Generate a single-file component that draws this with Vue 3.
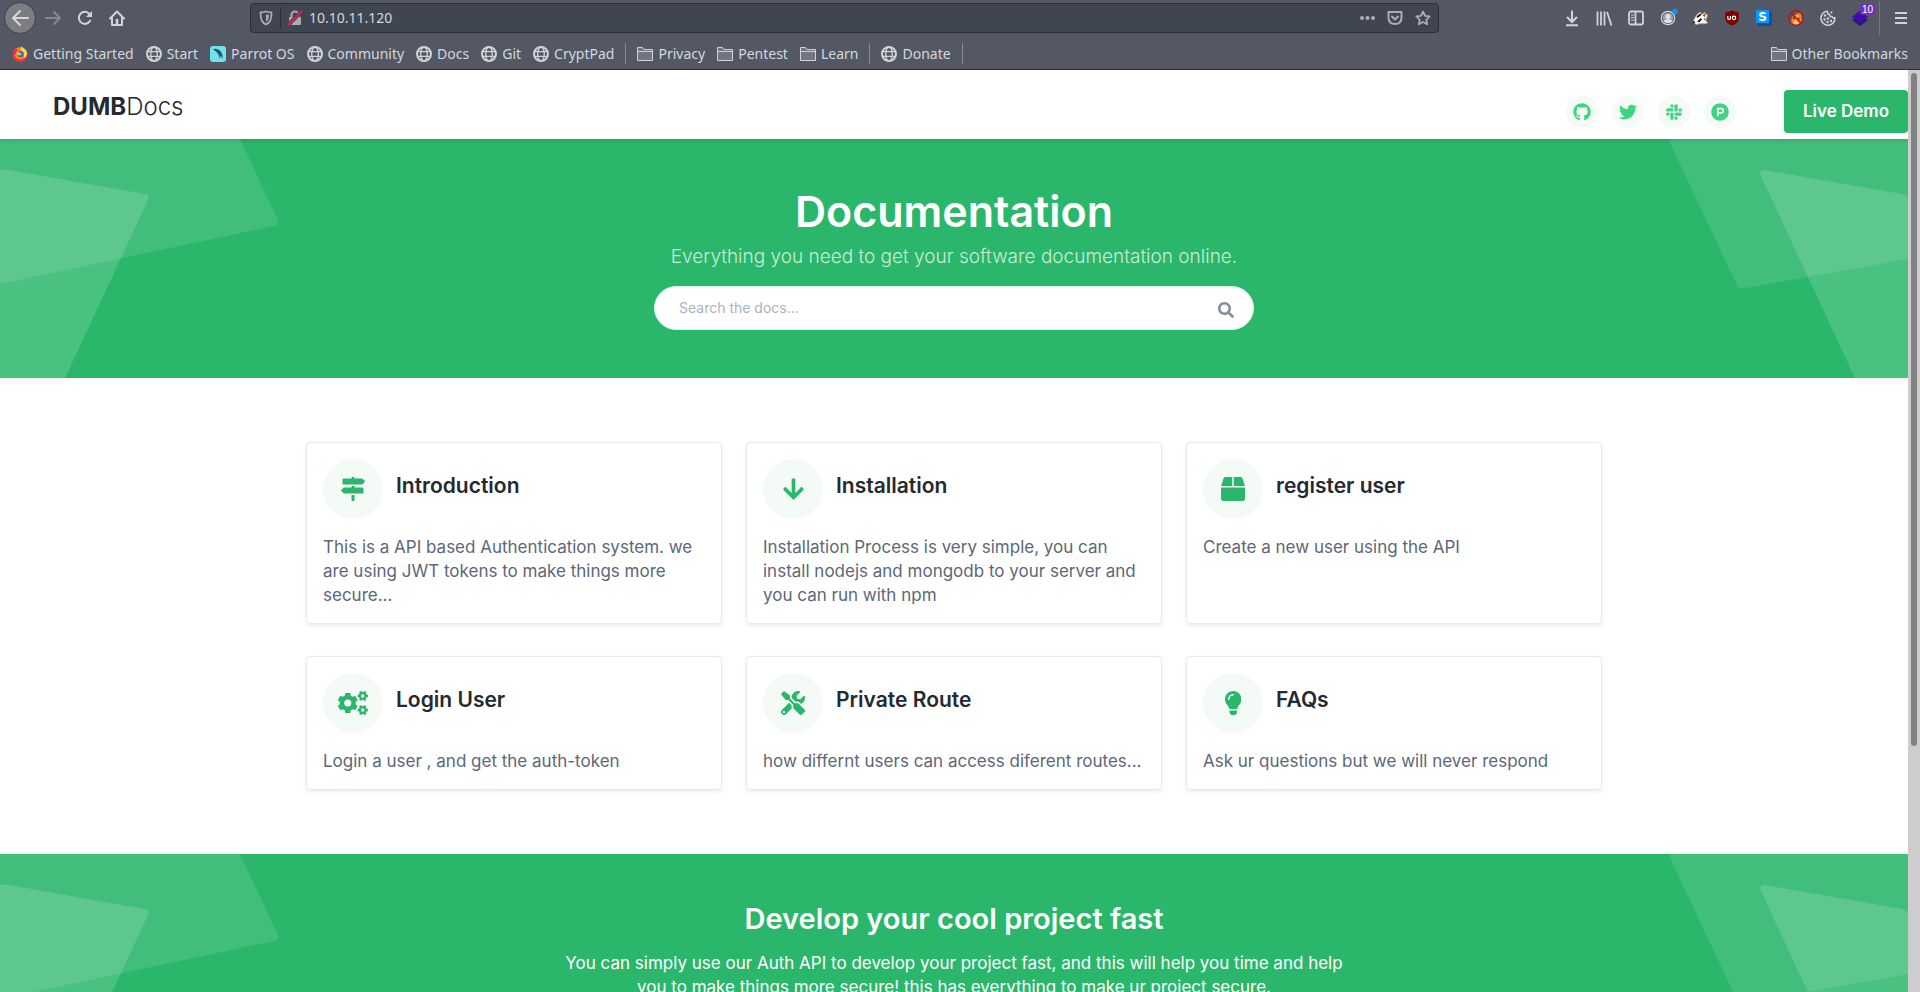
<script setup>
const bookmarks = [
  { label: 'Getting Started', icon: 'firefox' },
  { label: 'Start', icon: 'globe' },
  { label: 'Parrot OS', icon: 'parrot' },
  { label: 'Community', icon: 'globe' },
  { label: 'Docs', icon: 'globe' },
  { label: 'Git', icon: 'globe' },
  { label: 'CryptPad', icon: 'globe', divider: true },
  { label: 'Privacy', icon: 'folder' },
  { label: 'Pentest', icon: 'folder' },
  { label: 'Learn', icon: 'folder', divider: true },
  { label: 'Donate', icon: 'globe', divider: true },
]

const socials = [
  { name: 'GitHub', box: '0 0 496 512', d: 'M244.8 8C106.1 8 0 113.3 0 252c0 110.9 69.8 205.8 169.5 239.2 12.8 2.3 17.3-5.6 17.3-12.1 0-6.2-.3-40.4-.3-61.4 0 0-70 15-84.7-29.8 0 0-11.4-29.1-27.8-36.6 0 0-22.9-15.7 1.6-15.4 0 0 24.9 2 38.6 25.8 21.9 38.6 58.6 27.5 72.9 20.9 2.3-16 8.8-27.1 16-33.7-55.9-6.2-112.3-14.3-112.3-110.5 0-27.5 7.6-41.3 23.6-58.9-2.6-6.5-11.1-33.3 2.6-67.9 20.9-6.5 69 27 69 27 20-5.6 41.5-8.5 62.8-8.5s42.8 2.9 62.8 8.5c0 0 48.1-33.6 69-27 13.7 34.7 5.2 61.4 2.6 67.9 16 17.7 25.8 31.5 25.8 58.9 0 96.5-58.9 104.2-114.8 110.5 9.2 7.9 17 22.9 17 46.4 0 33.7-.3 75.4-.3 83.6 0 6.5 4.6 14.4 17.3 12.1C428.2 457.8 496 362.9 496 252 496 113.3 383.5 8 244.8 8z' },
  { name: 'Twitter', box: '0 0 512 512', d: 'M459.37 151.716c.325 4.548.325 9.097.325 13.645 0 138.72-105.583 298.558-298.558 298.558-59.452 0-114.68-17.219-161.137-47.106 8.447.974 16.568 1.299 25.34 1.299 49.055 0 94.213-16.568 130.274-44.832-46.132-.975-84.792-31.188-98.112-72.772 6.498.974 12.995 1.624 19.818 1.624 9.421 0 18.843-1.3 27.614-3.573-48.081-9.747-84.143-51.98-84.143-102.985v-1.299c13.969 7.797 30.214 12.67 47.431 13.319-28.264-18.843-46.781-51.005-46.781-87.391 0-19.492 5.197-37.36 14.294-52.954 51.655 63.675 129.3 105.258 216.365 109.807-1.624-7.797-2.599-15.918-2.599-24.04 0-57.828 46.782-104.934 104.934-104.934 30.213 0 57.502 12.67 76.67 33.137 23.715-4.548 46.456-13.32 66.599-25.34-7.798 24.366-24.366 44.833-46.132 57.827 21.117-2.273 41.584-8.122 60.426-16.243-14.292 20.791-32.161 39.308-52.628 54.253z' },
  { name: 'Slack', box: '0 0 448 512', d: 'M94.12 315.1c0 25.9-21.16 47.06-47.06 47.06S0 341 0 315.1c0-25.9 21.16-47.06 47.06-47.06h47.06v47.06zm23.72 0c0-25.9 21.16-47.06 47.06-47.06s47.06 21.16 47.06 47.06v117.84c0 25.9-21.16 47.06-47.06 47.06s-47.06-21.16-47.06-47.06V315.1zm47.06-188.98c-25.9 0-47.06-21.16-47.06-47.06S139 32 164.9 32s47.06 21.16 47.06 47.06v47.06H164.9zm0 23.72c25.9 0 47.06 21.16 47.06 47.06s-21.16 47.06-47.06 47.06H47.06C21.16 243.96 0 222.8 0 196.9s21.16-47.06 47.06-47.06H164.9zm188.98 47.06c0-25.9 21.16-47.06 47.06-47.06 25.9 0 47.06 21.16 47.06 47.06s-21.16 47.06-47.06 47.06h-47.06V196.9zm-23.72 0c0 25.9-21.16 47.06-47.06 47.06-25.9 0-47.06-21.16-47.06-47.06V79.06c0-25.9 21.16-47.06 47.06-47.06 25.9 0 47.06 21.16 47.06 47.06V196.9zM283.1 385.88c25.9 0 47.06 21.16 47.06 47.06 0 25.9-21.16 47.06-47.06 47.06-25.9 0-47.06-21.16-47.06-47.06v-47.06h47.06zm0-23.72c-25.9 0-47.06-21.16-47.06-47.06 0-25.9 21.16-47.06 47.06-47.06h117.84c25.9 0 47.06 21.16 47.06 47.06 0 25.9-21.16 47.06-47.06 47.06H283.1z' },
  { name: 'Product Hunt', box: '0 0 512 512', d: 'M326.3 218.8c0 20.5-16.7 37.2-37.2 37.2h-70.3v-74.4h70.3c20.5 0 37.2 16.7 37.2 37.2zM504 256c0 137-111 248-248 248S8 393 8 256 119 8 256 8s248 111 248 248zm-128.1-37.2c0-47.9-38.9-86.8-86.8-86.8H169.2v248h49.6v-74.4h70.3c47.9 0 86.8-38.9 86.8-86.8z' },
]

// Six-toothed cog outline with a round hole.
function gear(cx, cy, outer, inner, hole, turn) {
  const step = Math.PI / 3
  const at = (r, a) => `${(cx + r * Math.cos(a)).toFixed(1)} ${(cy + r * Math.sin(a)).toFixed(1)}`
  const points = []
  for (let i = 0; i < 6; i++) {
    const a = turn + i * step
    points.push(at(inner, a - 0.36), at(outer, a - 0.25), at(outer, a + 0.25), at(inner, a + 0.36))
  }
  return `M${points.join('L')}ZM${cx - hole} ${cy}a${hole} ${hole} 0 1 0 ${2 * hole} 0a${hole} ${hole} 0 1 0 ${-2 * hole} 0Z`
}
const cogs = gear(208, 256, 222, 172, 76, Math.PI / 2) + gear(528, 106, 114, 84, 36, 0) + gear(528, 406, 114, 84, 36, 0)

const cards = [
  { title: 'Introduction', text: 'This is a API based Authentication system. we are using JWT tokens to make things more secure...', box: '0 0 512 512', d: 'M507.31 84.69L464 41.37c-6-6-14.14-9.37-22.63-9.37H288V16c0-8.84-7.16-16-16-16h-32c-8.84 0-16 7.16-16 16v16H56c-13.25 0-24 10.75-24 24v80c0 13.25 10.75 24 24 24h385.37c8.49 0 16.62-3.37 22.63-9.37l43.31-43.31c6.25-6.26 6.25-16.38 0-22.63zM224 496c0 8.84 7.16 16 16 16h32c8.84 0 16-7.16 16-16V384h-64v112zm232-272H288v-32h-64v32H70.63c-8.49 0-16.62 3.37-22.63 9.37L4.69 276.69c-6.25 6.25-6.25 16.38 0 22.63L48 342.63c6 6 14.14 9.37 22.63 9.37H456c13.25 0 24-10.75 24-24v-80c0-13.25-10.75-24-24-24z' },
  { title: 'Installation', text: 'Installation Process is very simple, you can install nodejs and mongodb to your server and you can run with npm', box: '0 0 448 512', d: 'M413.1 222.5l22.2 22.2c9.4 9.4 9.4 24.6 0 33.9L241 473c-9.4 9.4-24.6 9.4-33.9 0L12.7 278.6c-9.4-9.4-9.4-24.6 0-33.9l22.2-22.2c9.5-9.5 25-9.3 34.3.4L184 343.4V56c0-13.3 10.7-24 24-24h32c13.3 0 24 10.7 24 24v287.4l114.8-120.5c9.3-9.8 24.8-10 34.3-.4z' },
  { title: 'register user', text: 'Create a new user using the API', box: '0 0 512 512', d: 'M509.5 184.6L458.9 32.8C452.4 13.2 434.1 0 413.4 0H272v192h238.7c-.4-2.5-.4-5-1.2-7.4zM240 0H98.6c-20.7 0-39 13.2-45.5 32.8L2.5 184.6c-.8 2.4-.8 4.9-1.2 7.4H240V0zM0 224v240c0 26.5 21.5 48 48 48h416c26.5 0 48-21.5 48-48V224H0z' },
  { title: 'Login User', text: 'Login a user , and get the auth-token', box: '0 0 640 512', d: cogs },
  { title: 'Private Route', text: 'how differnt users can access diferent routes...', box: '0 0 512 512', d: 'M501.1 395.7L384 278.6c-23.1-23.1-57.6-27.6-85.4-13.9L192 158.1V96L64 0 0 64l96 128h62.1l106.6 106.6c-13.6 27.8-9.2 62.3 13.9 85.4l117.1 117.1c14.6 14.6 38.2 14.6 52.7 0l52.7-52.7c14.5-14.6 14.5-38.2 0-52.7zM331.7 225c28.3 0 54.9 11 74.9 31l19.4 19.4c15.8-6.9 30.8-16.5 43.8-29.5 37.1-37.1 49.7-89.3 37.9-136.7-2.2-9-13.5-12.1-20.1-5.5l-74.4 74.4-67.9-11.3L334 98.9l74.4-74.4c6.6-6.6 3.4-17.9-5.7-20.2-47.4-11.7-99.6.9-136.6 37.9-28.5 28.5-41.9 66.1-41.2 103.6l82.1 82.1c8.1-1.9 16.5-2.9 24.7-2.9zm-103.9 82l-56.7-56.7L18.7 402.8c-25 25-25 65.5 0 90.5s65.5 25 90.5 0l123.6-123.6c-7.6-19.9-9.9-41.6-5-62.7zM64 472c-13.2 0-24-10.8-24-24 0-13.3 10.7-24 24-24s24 10.7 24 24c0 13.2-10.7 24-24 24z' },
  { title: 'FAQs', text: 'Ask ur questions but we will never respond', box: '0 0 352 512', d: 'M96.06 454.35c.01 6.29 1.87 12.45 5.36 17.69l17.09 25.69a31.99 31.99 0 0 0 26.64 14.28h61.71a31.99 31.99 0 0 0 26.64-14.28l17.09-25.69a31.989 31.989 0 0 0 5.36-17.69l.04-38.35H96.01l.05 38.35zM0 176c0 44.37 16.45 84.85 43.56 115.78 16.52 18.85 42.36 58.23 52.21 91.45.04.26.07.52.11.78h160.24c.04-.26.07-.51.11-.78 9.85-33.22 35.69-72.6 52.21-91.45C335.55 260.85 352 220.37 352 176 352 78.61 272.91-.3 175.45 0 73.44.31 0 82.97 0 176zm176-80c-44.11 0-80 35.89-80 80 0 8.84-7.16 16-16 16s-16-7.16-16-16c0-61.76 50.24-112 112-112 8.84 0 16 7.16 16 16s-7.16 16-16 16z' },
]
</script>

<template>
  <div class="window">
    <svg class="defs" width="0" height="0" aria-hidden="true">
      <symbol id="globe" viewBox="0 0 16 16">
        <g fill="none" stroke="#d0d4da">
          <circle cx="8" cy="8" r="7" stroke-width="2" />
          <ellipse cx="8" cy="8" rx="3.3" ry="7" stroke-width="1.3" />
          <path d="M1.5 5.7h13M1.5 10.3h13" stroke-width="1.3" />
        </g>
      </symbol>
      <symbol id="folder" viewBox="0 0 16 16">
        <path d="M.5 14.5v-13h5l1.5 2h8.500v11zM.5 5.500h15" fill="#717580" stroke="#d0d4da" />
      </symbol>
      <symbol id="firefox" viewBox="0 0 16 16">
        <circle cx="8" cy="8.500" r="7.200" fill="#ff8a16" />
        <path d="M1 5l1.500-3 1 2L6 2.500 5 6 2.500 9Q4 14 9 13.500T14.500 8 12 2.500Q17 6 14.700 12 11 17 5.500 15.300 0 13 1 5z" fill="#f5264a" />
        <path d="M9 .5q5 2.500 6 6 0 4-2.500 5.500Q12 7 9 5z" fill="#ffd83a" />
        <circle cx="8.500" cy="8" r="3.200" fill="#2364d8" />
        <path d="M4.500 5L8 6.500 10 9l-3 .5-2-1z" fill="#ffb52b" />
        <path d="M8 4.500l2.500 1L10 8z" fill="#1aa0ef" />
      </symbol>
      <symbol id="parrot" viewBox="0 0 16 16">
        <rect width="16" height="16" rx="3" fill="#6fe3ef" />
        <path d="M3 3.200Q8 1.800 10.800 5.500q2 2.700 2 7.500L10.500 9.500 10 13 8.200 8Q7 6 3 3.200z" fill="#33515e" />
      </symbol>
      <symbol id="shapes-left" viewBox="0 0 280 239">
        <path d="M0 0H240L277.500 80Q280 86 274 87L0 145Z" fill="#fff" fill-opacity=".11" />
        <path d="M0 31Q4 30 9 31L145 55Q150 56 148 61L65 239H0Z" fill="#fff" fill-opacity=".15" />
      </symbol>
      <symbol id="shapes-right" viewBox="0 0 238 239">
        <path d="M0 0V4L66 144Q68 150 75 149L238 120V0Z" fill="#fff" fill-opacity=".11" />
        <path d="M185 239L90 35Q90 31 95 31L232 55Q237 57 238 59V239Z" fill="#fff" fill-opacity=".15" />
      </symbol>
    </svg>

    <div class="chrome">
      <div class="toolbar">
        <button class="tool back" aria-label="Back">
          <svg viewBox="0 0 16 16" fill="none" stroke="#d5d8dd" stroke-width="2"><path d="M16 8H1M8 1L1 8l7 7" stroke-linejoin="round" stroke-linecap="round" /></svg>
        </button>
        <button class="tool" aria-label="Forward">
          <svg viewBox="0 0 16 16" fill="none" stroke="#868a94" stroke-width="2"><path d="M0 8h15M8.500 1.500L15 8l-6.500 6.500" stroke-linejoin="round" /></svg>
        </button>
        <button class="tool" aria-label="Reload">
          <svg viewBox="0 0 16 16" fill="none" stroke="#d0d4da" stroke-width="2"><path d="M12.500 4A6 6 0 1 0 13.500 10" /><path d="M15 1v6H9z" fill="#d0d4da" stroke="none" /></svg>
        </button>
        <button class="tool" aria-label="Home">
          <svg viewBox="0 0 16 16" fill="none" stroke="#d0d4da" stroke-width="2"><path d="M1 8.500L8 1.500l7 7M3 8v7h10V8" stroke-linejoin="round" stroke-linecap="round" /><path d="M8 9v6" stroke-width="2.500" /></svg>
        </button>
        <span class="spacer"></span>
        <div class="urlbar">
          <svg class="ico" viewBox="0 0 16 16" fill="none" stroke="#a9adb6" stroke-width="1.800"><path d="M8 1.500q3 1 5.500 1 .3 9.500-5.500 12Q2.200 12 2.500 2.500 5 2.500 8 1.500z" stroke-linejoin="round" /><path d="M8 4v8q3-2 3-7-1.500 0-3-1z" fill="#a9adb6" stroke="none" /></svg>
          <span class="url-rule"></span>
          <svg class="ico" viewBox="0 0 16 16"><path d="M4.500 8V5a3.500 3.500 0 0 1 7 0v3" fill="none" stroke="#a9adb6" stroke-width="2" /><rect x="2" y="7" width="12" height="8" rx="1" fill="#a9adb6" /><path d="M1 15L15 1" stroke="#404651" stroke-width="4" /><path d="M1.500 14.500l13-13" stroke="#ff0f45" stroke-width="2" stroke-linecap="round" /></svg>
          <input class="url" aria-label="Address" value="10.10.11.120" />
          <svg class="ico" viewBox="0 0 16 16" fill="#a9adb6"><circle cx="3" cy="8" r="2" /><circle cx="8.500" cy="8" r="2" /><circle cx="14" cy="8" r="2" /></svg>
          <svg class="ico" viewBox="0 0 16 16" fill="none" stroke="#a9adb6" stroke-width="2" stroke-linejoin="round"><path d="M1.500 2h13v5q0 7-6.500 7T1.500 7z" /><path d="M5 6.500l3 3 3-3" stroke-linecap="round" /></svg>
          <svg class="ico" viewBox="0 0 16 16" fill="none" stroke="#a9adb6" stroke-width="1.800" stroke-linejoin="round"><path d="M8 1.500l2 4.300 4.700.6-3.400 3.200.9 4.700L8 12l-4.200 2.300.9-4.700L1.300 6.400 6 5.800z" /></svg>
        </div>
        <span class="spacer"></span>
        <button class="tool" aria-label="Downloads">
          <svg viewBox="0 0 16 16" fill="none" stroke="#d0d4da" stroke-width="2"><path d="M8 .5v11M3 7l5 5 5-5M2 15.200h12" /></svg>
        </button>
        <button class="tool" aria-label="Library">
          <svg viewBox="0 0 16 16" fill="none" stroke="#d0d4da" stroke-width="1.800"><path d="M1.500 1.500v14M5 1.500v14M8.500 1.500v14M11 2l4.500 13.500" /></svg>
        </button>
        <button class="tool" aria-label="Sidebar">
          <svg viewBox="0 0 16 16" fill="none" stroke="#d0d4da" stroke-width="1.800"><rect x="1" y="1.500" width="14" height="13" rx="2" /><path d="M7.500 2v12" /><path d="M3 5h3M3 7.500h3M3 10h3" stroke-width="1" /></svg>
        </button>
        <button class="tool" aria-label="Account">
          <svg viewBox="0 0 16 16"><circle cx="8" cy="8" r="6.700" fill="none" stroke="#d0d4da" stroke-width="1.200" /><circle cx="8" cy="8" r="5.200" fill="#9a9ea7" /><circle cx="8" cy="6.500" r="2.600" fill="#dfe2e6" /><path d="M4 11.500q0-2.200 4-2.200t4 2.200q-4 3-8 0z" fill="#dfe2e6" /><circle cx="15" cy="1.200" r="2.800" fill="#0a90ff" /></svg>
        </button>
        <button class="tool" aria-label="Privacy Badger">
          <svg viewBox="0 0 16 16"><path d="M.5 12.500L4.500 5 8 2 9.500 4.500l3.500-2 .5 2.500 2-.5-1.500 6 1.500 2.500-3 .8-4-.3-4 1z" fill="#fff" stroke="#dd9a66" /><path d="M4.500 6.500L8 3.500l1.500 1.500-4 3zM11 5l2-1-.5 3.500zM5 11.500l3.500-3.300 1.800 1-2.800 3z" fill="#1d1d20" /><path d="M11.500 9l2-1v3z" fill="#555" /><circle cx="1.600" cy="12.300" r="1.200" fill="#1d1d20" /></svg>
        </button>
        <button class="tool" aria-label="uBlock Origin">
          <svg viewBox="0 0 16 16"><path d="M8 .5Q11 2 14.800 2.200v6Q14 13.500 8 15.800 2 13.500 1.200 8.200v-6Q5 2 8 .5z" fill="#800000" /><path d="M3.800 6v2.200a1.300 1.300 0 0 0 2.600 0V6" fill="none" stroke="#fff" stroke-width="1.200" /><circle cx="10" cy="7.800" r="1.700" fill="none" stroke="#fff" stroke-width="1.200" /></svg>
        </button>
        <button class="tool" aria-label="Stylus">
          <svg viewBox="0 0 16 16"><path d="M0 0h13l3 3v13H3L0 13z" fill="#0a4f96" /><path d="M0 0h13v13H0z" fill="#0797ff" /><text x="6.500" y="11" text-anchor="middle" font-family="DejaVu Sans" font-weight="700" font-size="12" fill="#fff">S</text></svg>
        </button>
        <button class="tool" aria-label="FoxyProxy">
          <svg viewBox="0 0 16 16"><path d="M3 13L4 7l6-4 3 1 1 6-3 4-5 1z" fill="#f58220" /><path d="M5 12l3-2 3 3-3 2zM8 6l2-1 1 2z" fill="#ffd79a" /><path d="M5 7h1.500v2H5zM10 8h1.500v1.500H10z" fill="#703010" /><circle cx="8" cy="8" r="7.300" fill="none" stroke="#c80f0f" stroke-width="1.200" /><path d="M3 3l10 10" stroke="#c80f0f" stroke-width="1.400" /></svg>
        </button>
        <button class="tool" aria-label="Cookies">
          <svg viewBox="0 0 16 16"><path d="M7.500 1.200A7 7 0 1 0 14.900 7.500Q13 9 12 6.500 9.500 7 9.500 4.500 7 4.500 7.500 1.200z" fill="none" stroke="#d0d4da" stroke-width="1.500" stroke-linejoin="round" /><g fill="#d0d4da"><circle cx="5" cy="5.500" r="1.200" /><circle cx="4.500" cy="9.500" r="1.200" /><circle cx="8" cy="8.500" r="1.200" /><circle cx="7.500" cy="12" r="1.200" /><circle cx="11" cy="11" r="1.200" /><circle cx="11.500" cy="2.500" r="1.100" /></g></svg>
        </button>
        <button class="tool" aria-label="Wappalyzer">
          <svg viewBox="0 0 16 16"><path d="M0 10l8-4.500 8 4.500-8 6z" fill="#241a78" /><path d="M0 7l8-6.500L16 7l-8 6z" fill="#4608ad" /></svg>
          <span class="badge">10</span>
        </button>
        <span class="tool-rule"></span>
        <button class="tool" aria-label="Menu">
          <svg viewBox="0 0 16 16" stroke="#d0d4da" stroke-width="2"><path d="M2 3h12M2 8h12M2 13h12" /></svg>
        </button>
      </div>

      <nav class="bookmarks" aria-label="Bookmarks">
        <template v-for="b in bookmarks" :key="b.label">
          <a class="bookmark" href="#"><svg class="ico"><use :href="'#' + b.icon" /></svg>{{ b.label }}</a>
          <span v-if="b.divider" class="rule"></span>
        </template>
        <a class="bookmark other" href="#"><svg class="ico"><use href="#folder" /></svg>Other Bookmarks</a>
      </nav>
    </div>

    <div class="viewport">
      <div class="page">
        <header class="header">
          <a class="logo" href="#"><b>DUMB</b>Docs</a>
          <div class="actions">
            <a v-for="s in socials" :key="s.name" class="social" href="#" :aria-label="s.name">
              <svg :viewBox="s.box"><path :d="s.d" /></svg>
            </a>
            <a class="demo" href="#">Live Demo</a>
          </div>
        </header>

        <section class="band">
          <svg class="deco left"><use href="#shapes-left" /></svg>
          <svg class="deco right"><use href="#shapes-right" /></svg>
          <h1>Documentation</h1>
          <p class="tagline">Everything you need to get your software documentation online.</p>
          <form class="search" @submit.prevent>
            <input type="text" placeholder="Search the docs..." aria-label="Search the docs" />
            <button type="submit" aria-label="Search">
              <svg viewBox="0 0 512 512"><path d="M505 442.700L405.300 343c-4.500-4.500-10.600-7-17-7H372c27.600-35.300 44-79.700 44-128C416 93.100 322.900 0 208 0S0 93.100 0 208s93.100 208 208 208c48.300 0 92.700-16.400 128-44v16.300c0 6.400 2.500 12.500 7 17l99.700 99.700c9.400 9.400 24.600 9.400 33.900 0l28.300-28.300c9.400-9.400 9.400-24.600.1-34zM208 336c-70.700 0-128-57.200-128-128 0-70.700 57.200-128 128-128 70.700 0 128 57.200 128 128 0 70.700-57.200 128-128 128z" /></svg>
            </button>
          </form>
        </section>

        <main class="cards">
          <article v-for="c in cards" :key="c.title" class="card">
            <div class="card-head">
              <span class="disc"><svg :viewBox="c.box"><path :d="c.d" fill-rule="evenodd" /></svg></span>
              <h2>{{ c.title }}</h2>
            </div>
            <p>{{ c.text }}</p>
          </article>
        </main>

        <section class="band">
          <svg class="deco left"><use href="#shapes-left" /></svg>
          <svg class="deco right"><use href="#shapes-right" /></svg>
          <h2 class="cta-title">Develop your cool project fast</h2>
          <p class="cta-text">You can simply use our Auth API to develop your project fast, and this will help you time and help you to make things more secure! this has everything to make ur project secure.</p>
        </section>
      </div>
      <div class="scrollbar"><div class="thumb"></div></div>
    </div>
  </div>
</template>

<style>
body {
  margin: 0;
}
</style>

<style scoped>
* {
  box-sizing: border-box;
}
.window {
  display: flex;
  flex-direction: column;
  height: 100vh;
  overflow: hidden;
  background: #fff;
  color: #252930;
  font-family: Inter, "Noto Sans", sans-serif;
  font-size: 17px;
  line-height: 24px;
}
.defs {
  position: absolute;
}
a {
  color: inherit;
  text-decoration: none;
}
button {
  border: 0;
  padding: 0;
  background: none;
}
h1, h2, p {
  margin: 0;
}

.chrome {
  flex: none;
  background: #545864;
  border-bottom: 1px solid #2b2e39;
  color: #d3d7de;
  font-family: "Noto Sans", sans-serif;
}
.toolbar {
  display: flex;
  align-items: center;
  height: 36px;
  padding: 0 3px 0 4px;
}
.tool {
  position: relative;
  display: flex;
  align-items: center;
  justify-content: center;
  flex: none;
  width: 32px;
  height: 32px;
}
.tool svg {
  width: 16px;
  height: 16px;
  overflow: visible;
}
.back {
  margin-right: 1px;
  border: 1px solid #40434e;
  border-radius: 50%;
  background: #7c7d80;
}
.badge {
  position: absolute;
  top: 2px;
  right: 1px;
  padding: 0 2px;
  border-radius: 2px;
  background: #6a35b5;
  color: #fff;
  font-size: 10px;
  line-height: 11px;
}
.tool-rule {
  width: 1px;
  height: 34px;
  margin: 0 5px 0 3px;
  background: #747883;
}
.spacer {
  flex: 117 1 0;
}
.urlbar {
  flex: 1173 1 0;
  display: flex;
  align-items: center;
  height: 30px;
  padding: 0 7px;
  border: 1px solid #2b2e39;
  border-radius: 4px;
  background: #404651;
}
.urlbar .ico + .ico {
  margin-left: 12px;
}
.ico {
  flex: none;
  width: 16px;
  height: 16px;
}
.url-rule {
  width: 1px;
  height: 22px;
  margin: 0 6px;
  background: #2b2e39;
}
.url {
  flex: 1;
  min-width: 0;
  margin: 0 6px;
  padding: 0;
  border: 0;
  outline: 0;
  background: none;
  color: #d3d7de;
  font: 14px/22px "Noto Sans", sans-serif;
}
.bookmarks {
  display: flex;
  align-items: center;
  gap: 12px;
  height: 33px;
  padding: 2px 12px 0;
  font-size: 14px;
  line-height: 22px;
  white-space: nowrap;
}
.bookmark {
  display: flex;
  align-items: center;
  gap: 5px;
}
.other {
  margin-left: auto;
}
.rule {
  width: 1px;
  height: 21px;
  margin: 0 -1px;
  background: #858994;
}

.viewport {
  flex: 1;
  display: flex;
  min-height: 0;
}
.page {
  flex: 1;
  min-width: 0;
  overflow: hidden;
}
.scrollbar {
  flex: none;
  width: 12px;
  padding: 3px;
  background: #cdcdcd;
}
.thumb {
  width: 6px;
  height: 73.500%;
  border-radius: 3px;
  background: #808183;
}

.header {
  position: relative;
  z-index: 1;
  display: flex;
  justify-content: space-between;
  padding: 20px 0 6px 53px;
  background: #fff;
  box-shadow: 0 2px 4px rgba(0, 0, 0, 0.12);
}
.logo {
  font-size: 24px;
  font-weight: 300;
  line-height: 33px;
}
.logo b {
  font-weight: 700;
}
.actions {
  display: flex;
  align-items: center;
  gap: 14px;
}
.social {
  display: flex;
  align-items: center;
  justify-content: center;
  width: 32px;
  height: 32px;
  border-radius: 50%;
  background: #f4fbf7;
}
.social svg {
  height: 18px;
  width: 18px;
  fill: #40d482;
}
.demo {
  margin-left: 34px;
  padding: 9px 19px 10px;
  border-radius: 4px;
  background: #2ab76c;
  color: #fff;
  font-weight: 600;
}

.band {
  position: relative;
  display: flex;
  flex-direction: column;
  align-items: center;
  padding: 48px 0;
  overflow: hidden;
  background: #2ab76c;
  color: #fff;
  text-align: center;
}
.deco {
  position: absolute;
  top: 0;
  height: 239px;
}
.left {
  left: 0;
  width: 280px;
}
.right {
  right: 0;
  width: 238px;
}
h1 {
  font-size: 43px;
  font-weight: 600;
  line-height: 48px;
}
.tagline {
  margin-top: 8px;
  color: rgba(255, 255, 255, 0.75);
  font-size: 19px;
  font-weight: 300;
  line-height: 27px;
}
.search {
  display: flex;
  align-items: center;
  width: 600px;
  max-width: 100%;
  height: 44px;
  margin-top: 16px;
  padding: 0 19px 0 24px;
  border: 1px solid #d9f3e5;
  border-radius: 22px;
  background: #fff;
}
.search input {
  flex: 1;
  border: 0;
  padding: 0;
  outline: 0;
  background: none;
  color: #252930;
  font: 14px/20px Inter, sans-serif;
}
.search input::placeholder {
  color: #a9b3c1;
  opacity: 1;
}
.search button {
  display: flex;
  padding-top: 3px;
}
.search svg {
  width: 16px;
  height: 16px;
  fill: #828d9f;
}

.cards {
  display: grid;
  grid-template-columns: repeat(3, 1fr);
  gap: 32px 24px;
  max-width: 1296px;
  margin: 0 auto;
  padding: 64px 0;
}
.card {
  padding: 16px;
  border: 1px solid #e7e9ed;
  border-radius: 4px;
  box-shadow: 0 2px 4px rgba(0, 0, 0, 0.075);
}
.card-head {
  display: flex;
  align-items: center;
  gap: 13px;
  margin-bottom: 16px;
}
.disc {
  display: flex;
  align-items: center;
  justify-content: center;
  width: 60px;
  height: 60px;
  border-radius: 50%;
  background: #f4fbf7;
}
.disc svg {
  height: 24px;
  max-width: 30px;
  fill: #2ab76c;
}
.card h2 {
  padding-bottom: 6px;
  font-size: 21px;
  font-weight: 600;
}
.card p {
  color: #5d6778;
}

.cta-title {
  font-size: 29px;
  font-weight: 600;
  line-height: 33px;
}
.cta-text {
  max-width: 796px;
  margin-top: 16px;
}
</style>
